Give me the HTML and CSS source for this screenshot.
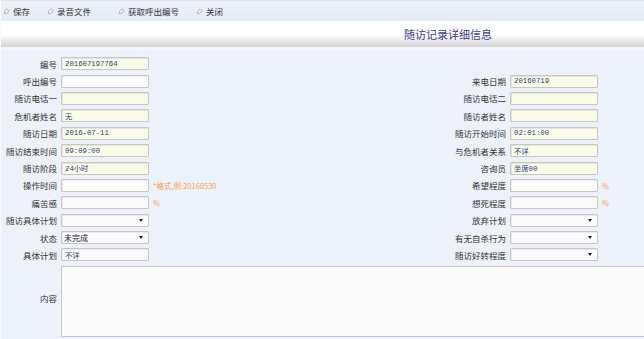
FILE: index.html
```html
<!DOCTYPE html>
<html lang="zh-CN">
<head>
    <meta charset="UTF-8">
    <title>随访记录详细信息</title>
    <link rel="stylesheet" href="styles.css">
</head>
<body>
    <div class="toolbar">
        <a class="tool" href="#"><svg viewBox="0 0 8 8"><path d="M1.5 6.5 L1.8 3.6 L4.8 0.8 L7.2 3.2 L4.4 6.2 Z" /></svg>保存</a>
        <a class="tool" href="#"><svg viewBox="0 0 8 8"><path d="M1.5 6.5 L1.8 3.6 L4.8 0.8 L7.2 3.2 L4.4 6.2 Z" /></svg>录音文件</a>
        <a class="tool" href="#"><svg viewBox="0 0 8 8"><path d="M1.5 6.5 L1.8 3.6 L4.8 0.8 L7.2 3.2 L4.4 6.2 Z" /></svg>获取呼出编号</a>
        <a class="tool" href="#"><svg viewBox="0 0 8 8"><path d="M1.5 6.5 L1.8 3.6 L4.8 0.8 L7.2 3.2 L4.4 6.2 Z" /></svg>关闭</a>
    </div>
    <div class="titlebar">随访记录详细信息</div>

    <div class="form">
        <label>编号</label><input class="ro" value="201607197764"><span></span><label></label><span></span><span></span>

        <label>呼出编号</label><input><span></span>
        <label>来电日期</label><input class="ro" value="20160719"><span></span>

        <label>随访电话一</label><input class="ro"><span></span>
        <label>随访电话二</label><input class="ro"><span></span>

        <label>危机者姓名</label><input class="ro" value="无"><span></span>
        <label>随访者姓名</label><input class="ro"><span></span>

        <label>随访日期</label><input class="ro" value="2016-07-11"><span></span>
        <label>随访开始时间</label><input class="ro" value="02:01:00"><span></span>

        <label>随访结束时间</label><input class="ro" value="09:09:00"><span></span>
        <label>与危机者关系</label><input class="ro" value="不详"><span></span>

        <label>随访阶段</label><input class="ro" value="24小时"><span></span>
        <label>咨询员</label><input class="ro" value="坐席00"><span></span>

        <label>操作时间</label><input><span class="note">*格式,例:20160530</span>
        <label>希望程度</label><input><span class="note">%</span>

        <label>痛苦感</label><input><span class="note">%</span>
        <label>想死程度</label><input><span class="note">%</span>

        <label>随访具体计划</label><div class="sel"><select><option></option></select></div><span></span>
        <label>放弃计划</label><div class="sel"><select><option></option></select></div><span></span>

        <label>状态</label><div class="sel"><select><option>未完成</option></select></div><span></span>
        <label>有无自杀行为</label><div class="sel"><select><option></option></select></div><span></span>

        <label>具体计划</label><input value="不详"><span></span>
        <label>随访好转程度</label><div class="sel"><select><option></option></select></div><span></span>

        <label class="content-label">内容</label><textarea class="content"></textarea>
    </div>
</body>
</html>
```

FILE: styles.css
```css
html, body {
    margin: 0;
    padding: 0;
    height: 100%;
    overflow: hidden;
}
body {
    background-color: #EDF2FA;
    font-family: "Noto Sans CJK SC", "Noto Sans", sans-serif;
    font-size: 8.5px;
    color: #333;
    border-left: 1px solid #F8FBFF;
    box-sizing: border-box;
}
.toolbar {
    height: 21px;
    background: linear-gradient(#EEF2F8, #E4EBF6);
    border-top: 1px solid #E0E4EA;
    box-sizing: border-box;
    display: grid;
    grid-template-columns: 44px 71px 78px auto;
    align-items: center;
    padding-left: 2px;
}
.tool {
    display: flex;
    align-items: center;
    color: #333;
    text-decoration: none;
}
.tool svg {
    width: 7px;
    height: 7px;
    margin-right: 3px;
    fill: none;
    stroke: #A0A8B0;
    stroke-width: 0.9;
}
.titlebar {
    height: 26px;
    background: linear-gradient(#FFFFFF 0%, #FFFFFF 50%, #E6E6E6 80%, #D2D2D2 100%);
    padding-left: 403px;
    line-height: 26px;
    font-size: 11px;
    color: #3C3C8E;
    border-bottom: 3px solid #F4F8FD;
}
.form {
    display: grid;
    grid-template-columns: 60px 88px 281px 80px 88px 1fr;
    grid-auto-rows: 17.4px;
    align-items: center;
    padding-top: 5px;
}
.form label {
    text-align: right;
    padding-right: 4px;
    white-space: nowrap;
}
.form input, .sel select {
    box-sizing: border-box;
    width: 88px;
    height: 13px;
    margin: 0;
    padding: 0 3px;
    border: 1px solid #C6C6C6;
    border-radius: 1px;
    background-color: #FAFAFA;
    box-shadow: inset 1px 1px 0 #EAEAEA;
    font-family: "Liberation Mono", "Noto Sans CJK SC", monospace;
    font-size: 7.3px;
    color: #2B3E80;
    outline: none;
}
.form input.ro {
    background-color: #FAFAE8;
    box-shadow: inset 1px 1px 0 #E6E6D4;
}
.sel {
    position: relative;
    width: 88px;
    height: 13px;
}
.sel select {
    appearance: none;
    -webkit-appearance: none;
    font-family: "Noto Sans CJK SC", sans-serif;
    font-size: 8px;
    color: #222;
    padding: 0 2px;
    line-height: 11px;
}
.sel::after {
    content: "";
    position: absolute;
    right: 6px;
    top: 5px;
    border-left: 2.5px solid transparent;
    border-right: 2.5px solid transparent;
    border-top: 3px solid #222;
}
.note {
    color: #F5A04A;
    font-size: 7.5px;
    padding-left: 4px;
    white-space: nowrap;
}
.content-label {
    grid-row: span 4;
    align-self: center;
}
.content {
    grid-column: 2 / span 5;
    grid-row: span 4;
    align-self: start;
    box-sizing: border-box;
    width: calc(100% + 10px);
    height: 71px;
    margin: 2px 0 0 0;
    border: 1px solid #C6C6C6;
    background-color: #FAFAFA;
    resize: none;
    outline: none;
}
```
